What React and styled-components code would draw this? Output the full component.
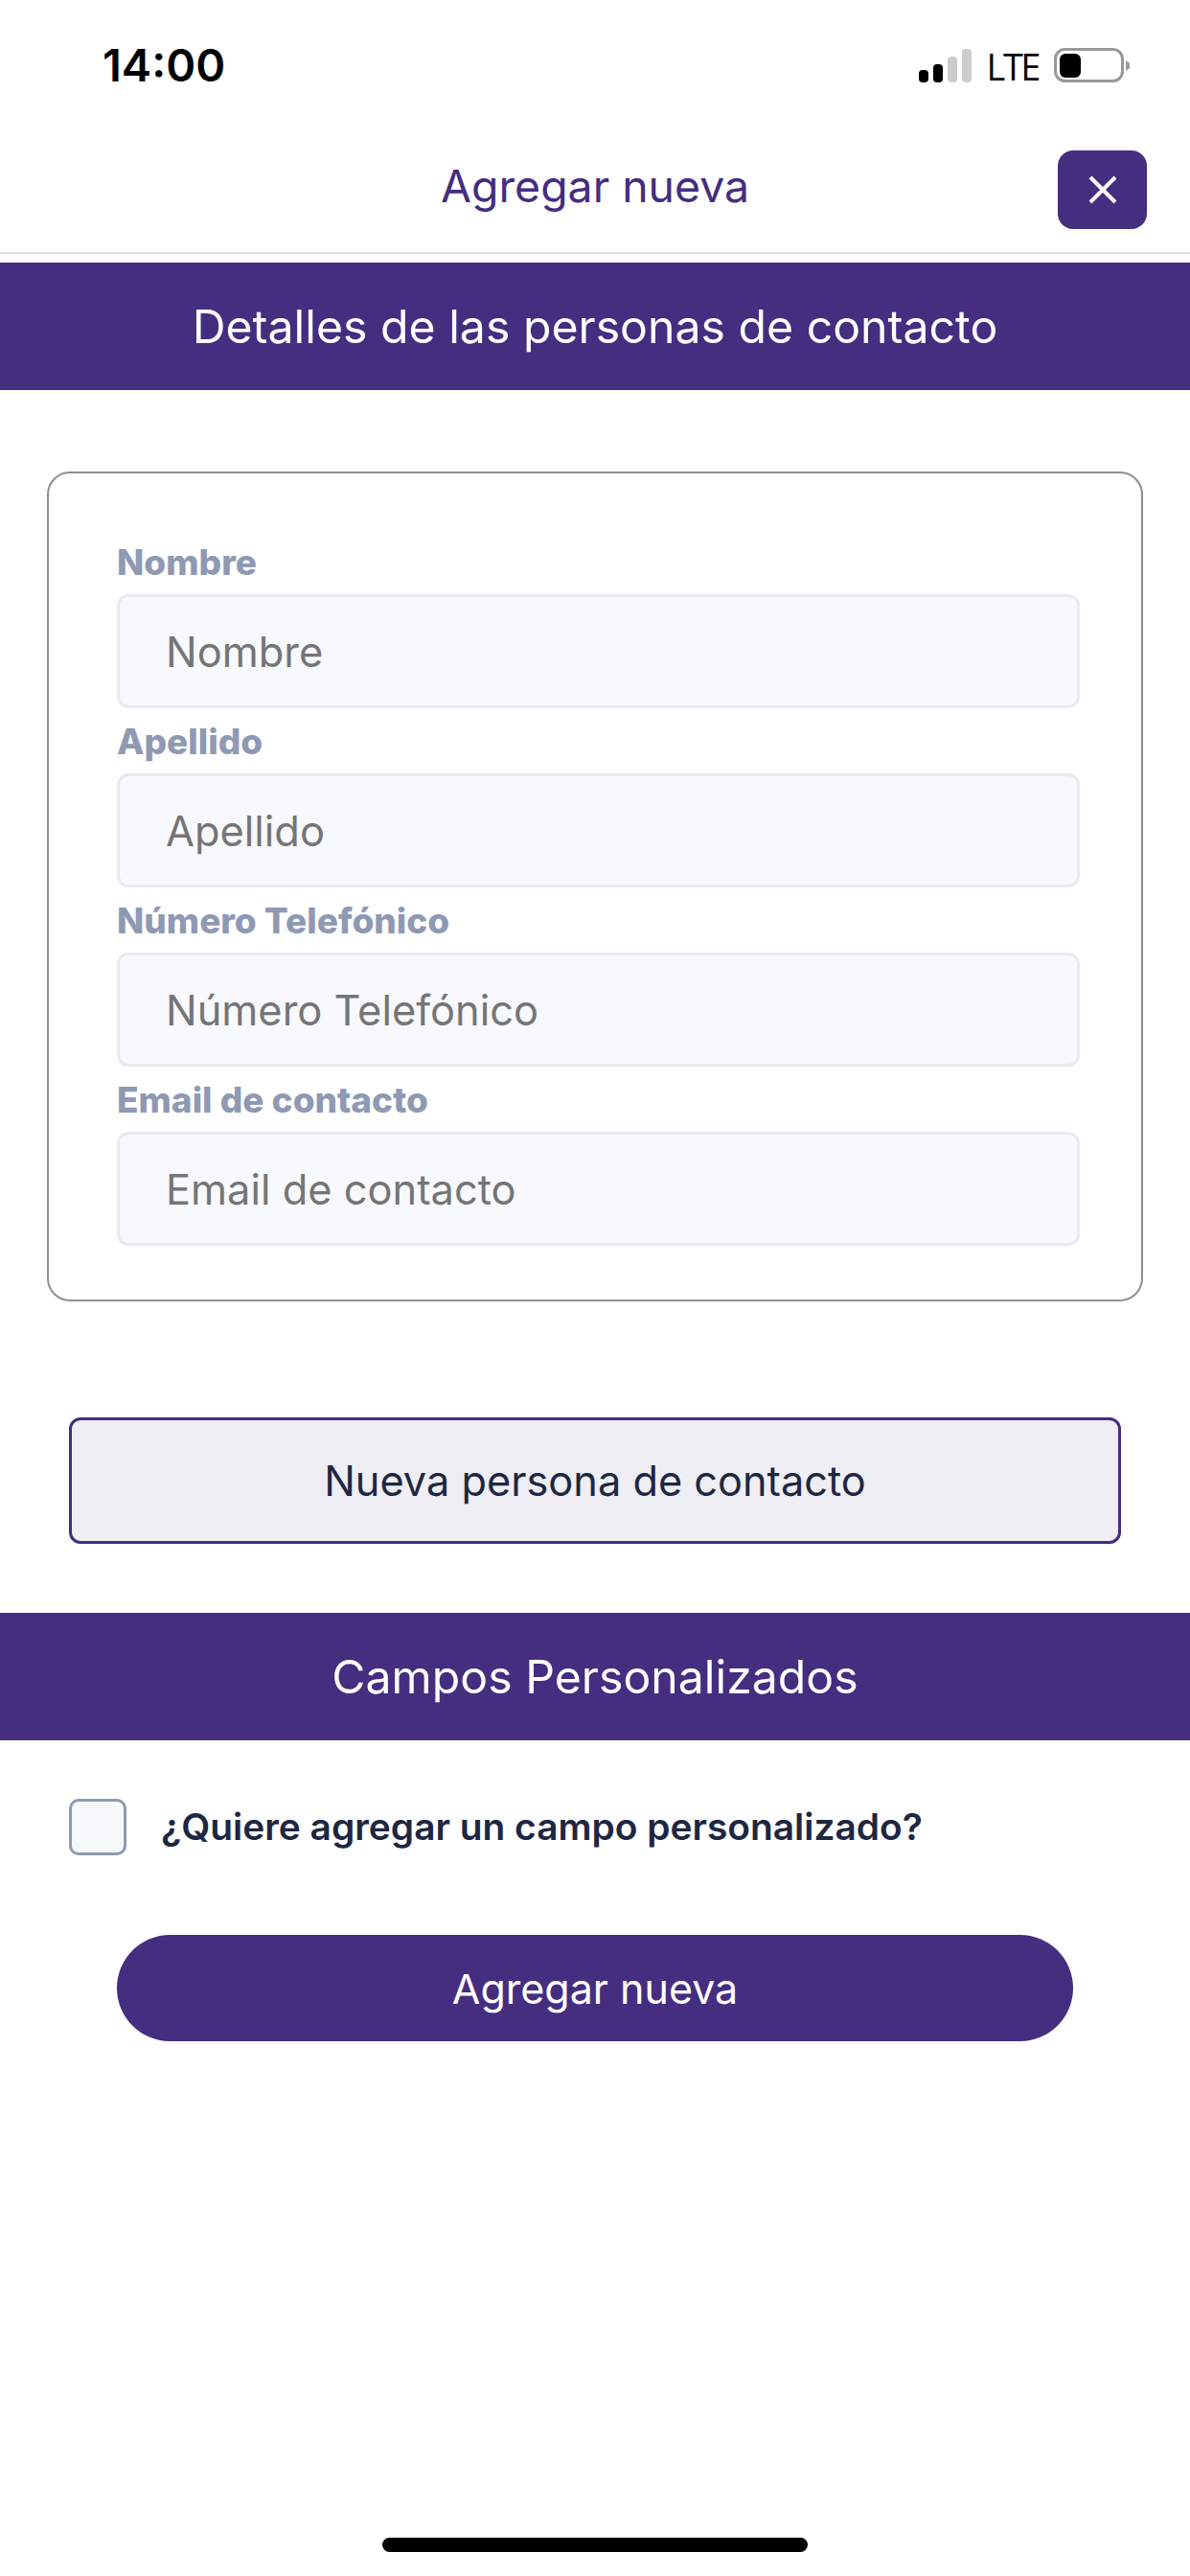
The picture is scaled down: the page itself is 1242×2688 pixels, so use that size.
import React from 'react'
import styled, { createGlobalStyle } from 'styled-components'

const purple = '#452d80'
const ink = '#1e2742'

const GlobalStyle = createGlobalStyle`
  html, body {
    margin: 0;
    padding: 0;
    background: #fff;
  }
  * {
    box-sizing: border-box;
  }
  body {
    font-family: Inter, "Liberation Sans", sans-serif;
  }
`

const Page = styled.div`
  width: 1242px;
  height: 2688px;
  display: flex;
  flex-direction: column;
  overflow: hidden;
  background: #fff;
`

const StatusBar = styled.div`
  height: 132px;
  flex: none;
  display: flex;
  justify-content: space-between;
  align-items: flex-start;
  padding: 40px 62px 0 107px;
`

const Time = styled.span`
  font-size: 47px;
  line-height: 56px;
  font-weight: 600;
  color: #000;
`

const StatusIcons = styled.div`
  display: flex;
  align-items: center;
  padding-top: 10px;
`

const Lte = styled.span`
  font-family: "Open Sans", sans-serif;
  font-size: 38px;
  line-height: 36px;
  color: #000;
  margin: 0 16px 0 15px;
  letter-spacing: -2.5px;
`

const NavBar = styled.header`
  height: 133px;
  flex: none;
  display: grid;
  grid-template-columns: 1fr auto 1fr;
  align-items: center;
  border-bottom: 2px solid #ddd;
`

const NavTitle = styled.h1`
  grid-column: 2;
  margin: 0 0 8px;
  font-size: 46.4px;
  font-weight: 400;
  color: ${purple};
`

const CloseButton = styled.button`
  grid-column: 3;
  justify-self: end;
  width: 93px;
  height: 82px;
  margin-right: 45px;
  border: 0;
  border-radius: 16px;
  background: ${purple};
  display: flex;
  align-items: center;
  justify-content: center;
  padding: 0;
`

const Band = styled.h2`
  flex: none;
  height: 133px;
  margin: ${(p) => p.$top}px 0 0;
  display: flex;
  align-items: center;
  justify-content: center;
  background: ${purple};
  color: #fff;
  font-size: 48.2px;
  font-weight: 400;
`

const Card = styled.section`
  flex: none;
  width: 1144px;
  margin: 85px 0 0 49px;
  padding: 58px 64px 56px 71px;
  border: 2px solid #909090;
  border-radius: 24px;
`

const Field = styled.div`
  display: flex;
  flex-direction: column;
`

const Label = styled.label`
  height: 68px;
  padding-top: 14px;
  font-size: 37px;
  line-height: 41px;
  font-weight: 800;
  color: #8f99b3;
`

const Input = styled.input`
  width: 100%;
  height: 119px;
  padding: 0 48px;
  border: 3px solid #e7ebf2;
  border-radius: 12px;
  background: #f8f9fd;
  font-family: inherit;
  font-size: 43.4px;
  color: #757575;

  &::placeholder {
    color: #757575;
    opacity: 1;
  }
`

const OutlineButton = styled.button`
  flex: none;
  width: 1098px;
  height: 132px;
  margin: 121px 0 0 72px;
  border: 3px solid ${purple};
  border-radius: 12px;
  background: #eeeef4;
  font-family: inherit;
  font-size: 43.3px;
  color: ${ink};
`

const CheckRow = styled.div`
  flex: none;
  display: flex;
  align-items: center;
  gap: 36px;
  margin: 61px 0 0 72px;
`

const Checkbox = styled.input`
  appearance: none;
  flex: none;
  width: 60px;
  height: 59px;
  margin: 0;
  border: 3px solid #8f9ab0;
  border-radius: 10px;
  background: #f6f8fa;
`

const CheckLabel = styled.label`
  padding-bottom: 2px;
  font-size: 38.9px;
  font-weight: 600;
  color: ${ink};
`

const SubmitButton = styled.button`
  flex: none;
  width: 998px;
  height: 111px;
  margin: 83px 0 0 122px;
  border: 0;
  border-radius: 56px;
  background: ${purple};
  color: #fff;
  font-family: inherit;
  font-size: 43px;
`

const HomeIndicator = styled.div`
  flex: none;
  width: 444px;
  height: 15px;
  margin: auto auto 25px;
  border-radius: 8px;
  background: #000;
`

const SignalIcon = () => (
  <svg width="56" height="36" viewBox="0 0 56 36">
    <rect x="0" y="22" width="10" height="13" rx="4" fill="#000" />
    <rect x="15" y="16" width="10" height="19" rx="4" fill="#000" />
    <rect x="30" y="8" width="10" height="27" rx="4" fill="#ccc" />
    <rect x="45" y="0" width="10" height="35" rx="4" fill="#ccc" />
  </svg>
)

const BatteryIcon = () => (
  <svg width="80" height="37" viewBox="0 0 80 37">
    <rect x="1.5" y="1.5" width="70" height="33" rx="10" fill="none" stroke="#999" strokeWidth="3" />
    <rect x="6" y="6" width="22" height="25" rx="6" fill="#000" />
    <path d="M75 13 L79 16 L79 21 L75 24 Z" fill="#999" />
  </svg>
)

const CloseIcon = () => (
  <svg width="32" height="32" viewBox="0 0 32 32">
    <path d="M3 3 L29 29 M29 3 L3 29" stroke="#fff" strokeWidth="4" fill="none" />
  </svg>
)

const fields = ['Nombre', 'Apellido', 'Número Telefónico', 'Email de contacto']

export default function App() {
  return (
    <Page>
      <GlobalStyle />
      <StatusBar>
        <Time>14:00</Time>
        <StatusIcons>
          <SignalIcon />
          <Lte>LTE</Lte>
          <BatteryIcon />
        </StatusIcons>
      </StatusBar>
      <NavBar>
        <NavTitle>Agregar nueva</NavTitle>
        <CloseButton aria-label="Cerrar">
          <CloseIcon />
        </CloseButton>
      </NavBar>
      <Band $top={9}>Detalles de las personas de contacto</Band>
      <Card>
        {fields.map((name) => (
          <Field key={name}>
            <Label>{name}</Label>
            <Input placeholder={name} />
          </Field>
        ))}
      </Card>
      <OutlineButton>Nueva persona de contacto</OutlineButton>
      <Band $top={72}>Campos Personalizados</Band>
      <CheckRow>
        <Checkbox type="checkbox" id="custom" />
        <CheckLabel htmlFor="custom">¿Quiere agregar un campo personalizado?</CheckLabel>
      </CheckRow>
      <SubmitButton>Agregar nueva</SubmitButton>
      <HomeIndicator />
    </Page>
  )
}
